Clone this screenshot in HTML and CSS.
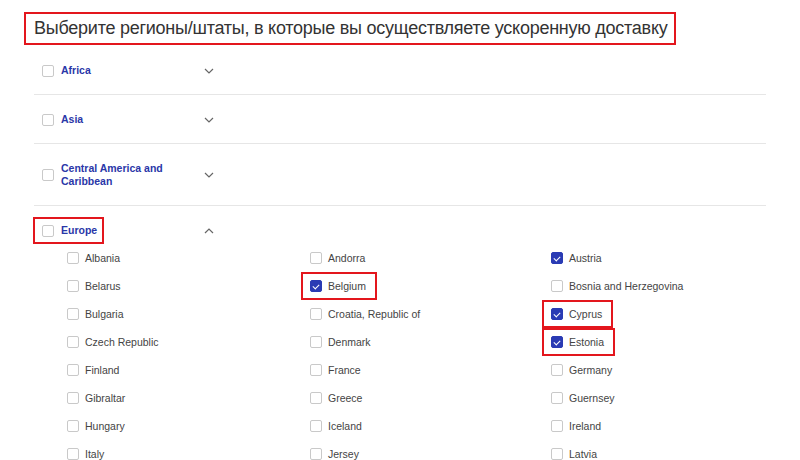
FILE: index.html
```html
<!DOCTYPE html>
<html lang="ru">
<head>
<meta charset="utf-8">
<title>Регионы</title>
<link rel="stylesheet" href="styles.css">
</head>
<body>
<div class="page">
  <h1 class="title">Выберите регионы/штаты, в которые вы осуществляете ускоренную доставку</h1>
  <div class="regions">
    <div class="region">
      <div class="head">
        <div class="head-main"><span class="cb"></span><span class="rlabel">Africa</span></div>
        <div class="chev"><svg width="10" height="6" viewBox="0 0 10 6"><path d="M1 1l4 4 4-4" fill="none" stroke="#666" stroke-width="1.2"/></svg></div>
      </div>
    </div>
    <div class="region">
      <div class="head">
        <div class="head-main"><span class="cb"></span><span class="rlabel">Asia</span></div>
        <div class="chev"><svg width="10" height="6" viewBox="0 0 10 6"><path d="M1 1l4 4 4-4" fill="none" stroke="#666" stroke-width="1.2"/></svg></div>
      </div>
    </div>
    <div class="region">
      <div class="head">
        <div class="head-main"><span class="cb"></span><span class="rlabel">Central America and Caribbean</span></div>
        <div class="chev"><svg width="10" height="6" viewBox="0 0 10 6"><path d="M1 1l4 4 4-4" fill="none" stroke="#666" stroke-width="1.2"/></svg></div>
      </div>
    </div>
    <div class="region open">
      <div class="head head-open">
        <div class="head-main"><span class="mark mark-region"><span class="cb"></span><span class="rlabel">Europe</span></span></div>
        <div class="chev"><svg width="10" height="6" viewBox="0 0 10 6"><path d="M1 5l4-4 4 4" fill="none" stroke="#666" stroke-width="1.2"/></svg></div>
      </div>
      <div class="countries">
        <div class="cell"><span class="cb"></span><span class="clabel">Albania</span></div>
        <div class="cell"><span class="cb"></span><span class="clabel">Andorra</span></div>
        <div class="cell"><span class="cb on"></span><span class="clabel">Austria</span></div>
        <div class="cell"><span class="cb"></span><span class="clabel">Belarus</span></div>
        <div class="cell"><span class="mark"><span class="cb on"></span><span class="clabel">Belgium</span></span></div>
        <div class="cell"><span class="cb"></span><span class="clabel">Bosnia and Herzegovina</span></div>
        <div class="cell"><span class="cb"></span><span class="clabel">Bulgaria</span></div>
        <div class="cell"><span class="cb"></span><span class="clabel">Croatia, Republic of</span></div>
        <div class="cell"><span class="mark"><span class="cb on"></span><span class="clabel">Cyprus</span></span></div>
        <div class="cell"><span class="cb"></span><span class="clabel">Czech Republic</span></div>
        <div class="cell"><span class="cb"></span><span class="clabel">Denmark</span></div>
        <div class="cell"><span class="mark"><span class="cb on"></span><span class="clabel">Estonia</span></span></div>
        <div class="cell"><span class="cb"></span><span class="clabel">Finland</span></div>
        <div class="cell"><span class="cb"></span><span class="clabel">France</span></div>
        <div class="cell"><span class="cb"></span><span class="clabel">Germany</span></div>
        <div class="cell"><span class="cb"></span><span class="clabel">Gibraltar</span></div>
        <div class="cell"><span class="cb"></span><span class="clabel">Greece</span></div>
        <div class="cell"><span class="cb"></span><span class="clabel">Guernsey</span></div>
        <div class="cell"><span class="cb"></span><span class="clabel">Hungary</span></div>
        <div class="cell"><span class="cb"></span><span class="clabel">Iceland</span></div>
        <div class="cell"><span class="cb"></span><span class="clabel">Ireland</span></div>
        <div class="cell"><span class="cb"></span><span class="clabel">Italy</span></div>
        <div class="cell"><span class="cb"></span><span class="clabel">Jersey</span></div>
        <div class="cell"><span class="cb"></span><span class="clabel">Latvia</span></div>
      </div>
    </div>
  </div>
</div>
</body>
</html>
```
FILE: styles.css
```css
html, body {
  margin: 0;
  padding: 0;
  background: #fff;
  overflow: hidden;
}
body {
  font-family: "Liberation Sans", Arial, Helvetica, sans-serif;
  color: #444;
}
.page {
  padding-top: 12px;
}
.title {
  box-sizing: border-box;
  margin: 0 0 0 24px;
  width: 652px;
  height: 33px;
  border: 2px solid #e3161d;
  padding: 0 0 0 8px;
  font-size: 18px;
  letter-spacing: -0.25px;
  font-weight: normal;
  line-height: 29px;
  color: #333;
  white-space: nowrap;
}
.regions {
  margin-top: 1px;
  margin-left: 34px;
  width: 732px;
}
.region {
  border-bottom: 1px solid #e6e6e6;
}
.region.open {
  border-bottom: none;
}
.head {
  display: grid;
  grid-template-columns: 156px 22px;
  align-items: center;
  padding: 18px 0 17px 8px;
}
.head-open {
  padding-bottom: 7px;
}
.head-main {
  display: flex;
  align-items: center;
}
.chev {
  display: flex;
  justify-content: center;
  align-items: center;
}
.chev svg {
  display: block;
}
.cb {
  box-sizing: border-box;
  flex: none;
  width: 12px;
  height: 12px;
  border: 1px solid #c9c9c9;
  border-radius: 2px;
  background: #fff;
  position: relative;
}
.cb.on {
  background: #2a3bb4;
  border-color: #2a3bb4;
}
.cb.on::after {
  content: "";
  position: absolute;
  left: 3px;
  top: 1.5px;
  width: 3px;
  height: 5px;
  border-right: 1.3px solid #fff;
  border-bottom: 1.3px solid #fff;
  transform: rotate(45deg);
}
.rlabel {
  margin-left: 7px;
  font-size: 10.5px;
  line-height: 13px;
  font-weight: bold;
  color: #2a37a8;
}
.countries {
  display: grid;
  grid-template-columns: 243px 241px 248px;
  margin-left: 33px;
}
.cell {
  display: flex;
  align-items: center;
  height: 28px;
}
.clabel {
  margin-left: 6px;
  font-size: 10.5px;
  line-height: 13px;
  color: #444;
  white-space: nowrap;
}
.mark {
  box-sizing: border-box;
  display: inline-flex;
  align-items: center;
  height: 28px;
  padding: 0 11px 0 9px;
  margin-left: -9px;
  box-shadow: inset 0 0 0 2px #e3161d;
}
.mark-region {
  height: 27px;
  margin: -7px 0 -7px -9px;
  padding: 0 7px 0 9px;
}
```
